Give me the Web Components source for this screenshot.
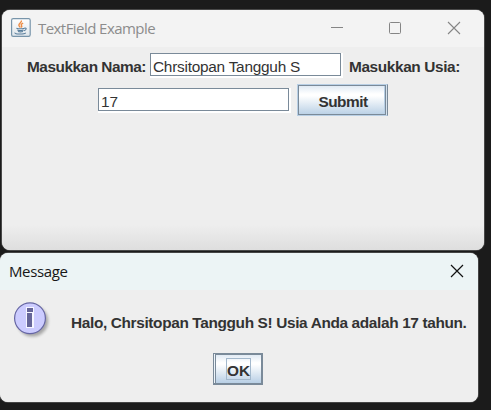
<!DOCTYPE html>
<html lang="id"><head><meta charset="utf-8"><title>TextField Example</title>
<style>
html,body{margin:0;height:100%;overflow:hidden;background:#1b1b1b}
</style></head><body>
<desktop-view></desktop-view>
<script>
const define=(name,html,init)=>{
  const t=document.createElement('template');t.innerHTML=html;
  customElements.define(name,class extends HTMLElement{
    constructor(){super();this.attachShadow({mode:'open'}).append(t.content.cloneNode(true));}
    connectedCallback(){if(init)init(this);}
  });
};

// A line of text whose tracking is adjusted to occupy the given advance width.
define('fit-text',`<style>:host{display:block;white-space:pre;flex:none;line-height:20px}span{display:inline-block}</style><span></span>`,el=>{
  const s=el.shadowRoot.querySelector('span');s.textContent=el.getAttribute('text');
  const w=+el.getAttribute('width'),n=s.textContent.length;
  el.style.width=w+'px';
  s.style.letterSpacing=((w-s.getBoundingClientRect().width)/n)+'px';
});

define('java-icon',`<style>:host{display:block;width:20px;height:20px;flex:none}svg{display:block}</style>
<svg width="20" height="20" viewBox="0 0 20 20" fill="none">
<defs><linearGradient id="g" x2="0" y2="1"><stop stop-color="#fff"/><stop offset="1" stop-color="#dfe6eb"/></linearGradient></defs>
<rect x=".6" y=".6" width="18.6" height="17.8" rx="1.6" fill="url(#g)" stroke="#7895aa" stroke-width="1.2"/>
<path d="M10.3 2.5c1 2-2.8 2.9-2.4 4.8.2.9 1 1.4 1.4 2.2M12.2 5.1c-2 .8-2.5 1.6-1.6 2.5.5.7.2 1.2-.4 1.8" stroke="#ee8c43" stroke-width="1.4"/>
<path d="M5.4 10.2c2.2.8 5.5.7 8.2 0M6.3 12c1.8.7 4.4.7 6.3 0M7 13.6c1.4.5 3.6.5 5 0M13.4 10.1c2.7-.5 2.2 2-.5 2.6M4.2 14.7c-1.7 1.7 9.2 1.8 10.6.1" stroke="#587d9b" stroke-width="1.1"/>
</svg>`);

define('info-icon',`<style>:host{display:block;width:40px;height:40px;flex:none}svg{display:block}</style>
<svg width="40" height="40" viewBox="0 0 40 40">
<defs><filter id="b" x="-20%" y="-20%" width="150%" height="150%"><feGaussianBlur stdDeviation="1.5"/></filter></defs>
<circle cx="18.5" cy="19" r="15.6" fill="#000" opacity=".3" filter="url(#b)"/>
<circle cx="16" cy="16.3" r="15.4" fill="#ccccff" stroke="#6666a3" stroke-width="1.2"/>
<path d="M12 5h8v21h-8z" fill="#f6f6ff"/><path d="M13 6h6v4h-6zM13 11h5v14h-5z" fill="#666699"/>
</svg>`);

define('window-controls',`<style>:host{display:block;flex:none}svg{display:block}</style>
<svg width="132" height="20" viewBox="0 0 132 20" fill="none" stroke="#858585" stroke-width="1">
<path d="M1 9.5h12"/><rect x="59.5" y="4.5" width="11" height="11" rx="1"/><path d="M118 4l12 12M130 4l-12 12" stroke-width="1.1"/></svg>`);

define('close-control',`<style>:host{display:block;flex:none}svg{display:block}</style>
<svg width="14" height="14" viewBox="0 0 14 14" fill="none" stroke="#111" stroke-width="1.2"><path d="M1 1l12 12M13 1L1 13"/></svg>`);

define('app-window',`<style>
:host{display:flex;flex-direction:column;box-sizing:border-box;border-radius:8px;overflow:hidden;background:#eee;color:#333;font:bold 15.4px "Liberation Sans",Arial,sans-serif}
header{height:37px;flex:none;display:flex;background:var(--bar);color:var(--bar-text);font:15px "Open Sans","Noto Sans",sans-serif}
main{flex:1;display:flex;flex-direction:column;background:var(--body,#eee)}
</style><header><slot name="bar"></slot></header><main><slot></slot></main>`);

define('text-field',`<style>
:host{display:block;box-sizing:border-box;width:193px;height:25px;flex:none;font-weight:normal;border-right:2px solid #fff;border-bottom:2px solid #fff}
div{box-sizing:border-box;width:191px;height:23px;background:#fff;border:1px solid #7a8a99;padding:3px 0 0 2px}
</style><div><slot></slot></div>`);

define('metal-button',`<style>
:host{display:flex;box-sizing:border-box;flex:none;background:linear-gradient(#dde8f3 0,#fff 30%,#fff 36%,#b8cfe5 100%);border:1px solid #7a8a99}
div{flex:1;display:flex;justify-content:center;box-sizing:border-box}
:host([kind=submit]){width:91px;height:32px;border:1px solid #b8cfe5;border-right-color:#7a8a99}
:host([kind=submit]) div{border:1px solid #7a8a99;margin-right:1px;padding:6px 0 0 2px;box-shadow:inset -1px 0 #b8cfe5,1px 0 #d5e2ee}
:host([kind=ok]){width:50px;height:32px;border-width:1px 2px 2px 1px}
:host([kind=ok]) div{border:solid #7a8a99;border-width:1px 0 0 1px;margin-left:1px;padding:3px 0 0 0;box-shadow:-1px 0 #edf4fa}
</style><div><slot></slot></div>`);

define('focus-frame',`<style>:host{display:block;box-sizing:border-box;width:25px;height:22px;border:1px solid #a3b8cc;padding-top:2px}</style><slot></slot>`);

define('desktop-view',`<style>
:host{display:flex;flex-direction:column;gap:3px;padding-top:10px}
.one{width:482px;height:240px;margin-left:2px;--bar:#f3f3f3;--bar-text:#8c8c8c;--body:linear-gradient(#eee 0,#eee 178px,#dedede 203px);box-shadow:0 0 0 1px #484848}
.two{width:478px;height:149px;--bar:#ecf4f5;--bar-text:#171717;box-shadow:0 0 0 1px #444}
.title{display:flex;flex:1;align-items:flex-start;padding:8px 22px 0 9px}
.title fit-text{margin-left:7px}
.title window-controls{margin-left:auto}
.dialog{display:flex;flex:1;justify-content:space-between;padding:8px 14px 0 9px}
.dialog close-control{margin-top:3px}
.row{display:flex;align-items:flex-start;height:35px;box-sizing:border-box}
.first{padding:6px 0 0 25px}.first>fit-text{margin-top:4px}.first text-field{margin:0 6px 0 4px}
.second{padding:2px 0 0 96px}.second text-field{margin:4px 6px 0 0}
.message{display:flex;padding:12px 0 0 14px}.message fit-text{margin:11px 0 0 17px}
.actions{display:flex;padding:11px 0 0 213px}
</style>
<app-window class="one"><div slot="bar" class="title"><java-icon></java-icon><fit-text text="TextField Example" width="117"></fit-text><window-controls></window-controls></div>
<div class="row first"><fit-text text="Masukkan Nama:" width="119"></fit-text><text-field><fit-text text="Chrsitopan Tangguh S" width="147"></fit-text></text-field><fit-text text="Masukkan Usia:" width="111"></fit-text></div>
<div class="row second"><text-field><fit-text text="17" width="17"></fit-text></text-field><metal-button kind="submit"><fit-text text="Submit" width="49"></fit-text></metal-button></div>
</app-window>
<app-window class="two"><div slot="bar" class="dialog"><fit-text text="Message" width="58.5"></fit-text><close-control></close-control></div>
<div class="message"><info-icon></info-icon><fit-text text="Halo, Chrsitopan Tangguh S! Usia Anda adalah 17 tahun." width="395.5"></fit-text></div>
<div class="actions"><metal-button kind="ok"><focus-frame><fit-text text="OK" width="23"></fit-text></focus-frame></metal-button></div>
</app-window>`);
</script></body></html>
